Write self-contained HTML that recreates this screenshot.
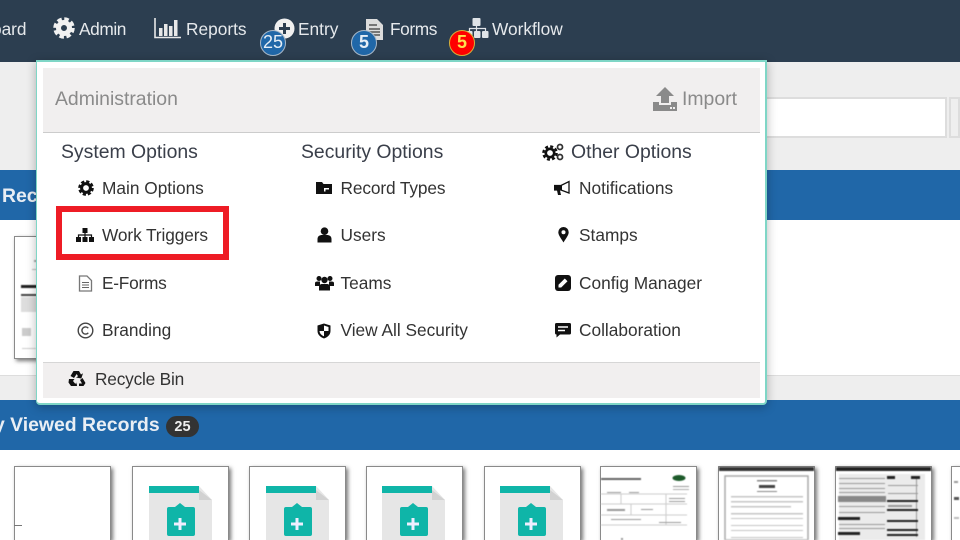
<!DOCTYPE html>
<html lang="en"><head><meta charset="utf-8"><title>Administration</title>
<style>
html,body{margin:0;padding:0;background:#fff;overflow:hidden;width:960px;height:540px}
#p{position:relative;width:960px;height:540px;overflow:hidden;background:#fff;font-family:"Liberation Sans",sans-serif;filter:blur(.35px)}
#p div,#p svg,#p span{position:absolute}
.t{white-space:nowrap;line-height:20px;font-size:17.3px;color:#333}
.n{color:#e6e9ec}
.h{font-size:19.4px;color:#3a3f4a}
.g{font-size:19.4px;color:#8a8a8a}
.b{font-size:19.4px;font-weight:bold;color:#e9eef4}
.th{background:#fff;border:1px solid #8a8a8a;border-bottom:none;box-shadow:2px 2px 4px #777;width:95px;height:73px;box-sizing:content-box}
.bd{width:26px;height:26px;border-radius:50%;box-sizing:border-box;border:1.5px solid #a9b9c9;background:#2067a8;color:#e6eef6;text-align:center;line-height:23px;font-size:18px}
.d{filter:blur(.5px)}
</style></head><body>
<div id="p">
<div style="left:0;top:0;width:960px;height:62px;background:#2c3e50"></div>
<div style="left:0;top:62px;width:960px;height:108px;background:#eee"></div>
<div style="left:760px;top:97px;width:187px;height:41px;background:#fff;border-top:2px solid #ddd;border-bottom:2px solid #ddd;border-right:2px solid #ddd;box-sizing:border-box"></div>
<div style="left:949px;top:97px;width:11px;height:41px;background:#efefef;border:2px solid #ddd;box-sizing:border-box"></div>
<div style="left:0;top:170px;width:960px;height:50px;background:#2067a8"></div>
<div style="left:0;top:220px;width:960px;height:155px;background:#fff"></div>
<div style="left:0;top:375px;width:960px;height:25px;background:#eee;border-top:1px solid #ddd;box-sizing:border-box"></div>
<div style="left:0;top:400px;width:960px;height:50px;background:#2067a8"></div>

<span class="t b" style="left:2px;top:186px">Rec</span>
<span class="t b" style="left:-6px;top:415px">y&nbsp;Viewed Records</span>
<div style="left:166px;top:416px;width:33px;height:21px;border-radius:11px;background:#333;color:#eee;font-size:14.5px;font-weight:bold;text-align:center;line-height:22px">25</div>

<!-- top-row thumbnail -->
<div class="th" style="left:14px;top:236px;width:60px;height:121px;border-bottom:1px solid #8a8a8a"></div>
<svg class="d" style="left:14px;top:236px" width="24" height="122" viewBox="0 0 24 122"><rect x="7" y="49" width="17" height="3" fill="#222"/><rect x="7" y="58" width="17" height="2" fill="#444"/><rect x="7" y="61" width="17" height="15" fill="#ddd"/><rect x="8" y="92" width="9" height="8" fill="#ccc"/><rect x="20" y="24" width="4" height="2" fill="#aaa"/><rect x="18" y="33" width="6" height="1" fill="#bbb"/><rect x="8" y="112" width="14" height="1" fill="#ccc"/></svg>

<!-- bottom-row thumbnails -->
<div class="th" style="left:14px;top:466px"></div>
<div style="left:14px;top:525px;width:8px;height:1px;background:#777"></div>
<div class="th" style="left:132px;top:466px"></div>
<div class="th" style="left:249px;top:466px"></div>
<div class="th" style="left:366px;top:466px"></div>
<div class="th" style="left:484px;top:466px"></div>
<div class="th" style="left:600px;top:466px"></div>
<div class="th" style="left:718px;top:466px"></div>
<div class="th" style="left:835px;top:466px"></div>
<div class="th" style="left:951px;top:466px"></div>

<svg style="left:149px;top:486px" width="64" height="54" viewBox="0 0 64 54"><path d="M0 0H50L63 14V54H0Z" fill="#e6e6e6"/><path d="M50 4L63 14H50Z" fill="#d2d2d2"/><rect width="50" height="7" fill="#0fb5a8"/><path d="M18 23a2 2 0 0 1 2-2h6l5-4 5 4h8a2 2 0 0 1 2 2v25a2 2 0 0 1-2 2H20a2 2 0 0 1-2-2z" fill="#0fb5a8"/><path d="M31 32v12M25 38h12" stroke="#eef" stroke-width="3"/></svg>
<svg style="left:266px;top:486px" width="64" height="54" viewBox="0 0 64 54"><path d="M0 0H50L63 14V54H0Z" fill="#e6e6e6"/><path d="M50 4L63 14H50Z" fill="#d2d2d2"/><rect width="50" height="7" fill="#0fb5a8"/><path d="M18 23a2 2 0 0 1 2-2h6l5-4 5 4h8a2 2 0 0 1 2 2v25a2 2 0 0 1-2 2H20a2 2 0 0 1-2-2z" fill="#0fb5a8"/><path d="M31 32v12M25 38h12" stroke="#eef" stroke-width="3"/></svg>
<svg style="left:382px;top:486px" width="64" height="54" viewBox="0 0 64 54"><path d="M0 0H50L63 14V54H0Z" fill="#e6e6e6"/><path d="M50 4L63 14H50Z" fill="#d2d2d2"/><rect width="50" height="7" fill="#0fb5a8"/><path d="M18 23a2 2 0 0 1 2-2h6l5-4 5 4h8a2 2 0 0 1 2 2v25a2 2 0 0 1-2 2H20a2 2 0 0 1-2-2z" fill="#0fb5a8"/><path d="M31 32v12M25 38h12" stroke="#eef" stroke-width="3"/></svg>
<svg style="left:500px;top:486px" width="64" height="54" viewBox="0 0 64 54"><path d="M0 0H50L63 14V54H0Z" fill="#e6e6e6"/><path d="M50 4L63 14H50Z" fill="#d2d2d2"/><rect width="50" height="7" fill="#0fb5a8"/><path d="M18 23a2 2 0 0 1 2-2h6l5-4 5 4h8a2 2 0 0 1 2 2v25a2 2 0 0 1-2 2H20a2 2 0 0 1-2-2z" fill="#0fb5a8"/><path d="M31 32v12M25 38h12" stroke="#eef" stroke-width="3"/></svg>

<!-- document thumbs -->
<svg class="d" style="left:601px;top:467px" width="95" height="73" viewBox="0 0 95 73"><rect x="0" y="11" width="40" height="2" fill="#666"/><ellipse cx="78" cy="11" rx="6.500" ry="3" fill="#1d5a2a"/><rect x="72" y="19" width="16" height="1" fill="#999"/><rect x="72" y="22" width="16" height="1" fill="#aaa"/><g fill="none" stroke="#ccc"><path d="M0 27H86M0 37H86M0 48H86M0 58H86M20 27V37M65 27V58M30 37V48"/></g><g fill="#999"><rect x="6" y="25" width="14" height="1"/><rect x="28" y="25" width="10" height="1"/><rect x="68" y="31" width="16" height="1"/><rect x="68" y="34" width="16" height="1"/><rect x="6" y="42" width="18" height="2"/><rect x="40" y="42" width="12" height="1"/><rect x="10" y="52" width="30" height="1"/><rect x="58" y="55" width="22" height="1"/><rect x="20" y="71" width="2" height="2"/></g></svg>
<svg class="d" style="left:719px;top:467px" width="95" height="73" viewBox="0 0 95 73"><rect width="95" height="4" fill="#333"/><rect x="6" y="9" width="83" height="64" fill="none" stroke="#aaa" stroke-width="1.500"/><rect x="38" y="13" width="20" height="1.500" fill="#888"/><rect x="40" y="18" width="16" height="3" fill="#444"/><rect x="38" y="24" width="20" height="1" fill="#888"/><g fill="#c6c6c6"><rect x="12" y="29" width="72" height="1.500"/><rect x="12" y="34" width="72" height="1.500"/><rect x="12" y="39" width="60" height="1.500"/><rect x="12" y="46" width="72" height="1.500"/><rect x="12" y="51" width="72" height="1"/><rect x="12" y="58" width="72" height="1"/><rect x="12" y="63" width="72" height="1"/><rect x="12" y="70" width="72" height="1"/></g></svg>
<svg class="d" style="left:836px;top:467px" width="95" height="73" viewBox="0 0 95 73"><rect width="95" height="4" fill="#222"/><rect x="3" y="7" width="86" height="66" fill="#ebebeb"/><g fill="#999"><rect x="3" y="11" width="46" height="1"/><rect x="3" y="16" width="46" height="1"/><rect x="3" y="21" width="46" height="1"/><rect x="3" y="25" width="46" height="1"/><rect x="3" y="39" width="46" height="1"/><rect x="3" y="45" width="46" height="1"/><rect x="3" y="57" width="46" height="1"/><rect x="3" y="61" width="46" height="1"/><rect x="52" y="18" width="30" height="1"/><rect x="52" y="26" width="30" height="1"/><rect x="52" y="38" width="24" height="2"/><rect x="80" y="10" width="1" height="60"/></g><rect x="2" y="29" width="48" height="6" fill="#888"/><g fill="#222"><rect x="2" y="50" width="22" height="3"/><rect x="2" y="65" width="22" height="3"/><rect x="51" y="9" width="8" height="3"/><rect x="75" y="9" width="9" height="3"/><rect x="51" y="33" width="31" height="2"/><rect x="51" y="42" width="31" height="2"/><rect x="51" y="53" width="31" height="2"/><rect x="51" y="62" width="31" height="2"/><rect x="51" y="67" width="31" height="2"/></g></svg>
<svg class="d" style="left:952px;top:467px" width="8" height="73" viewBox="0 0 8 73"><rect x="2" y="14" width="4" height="2" fill="#999"/><rect x="2" y="30" width="5" height="3" fill="#555"/><rect x="2" y="50" width="5" height="2" fill="#bbb"/></svg>

<!-- nav -->
<span class="t n" style="left:-58px;top:19px">Dashboard</span>
<svg style="left:53px;top:17px" width="22" height="22" viewBox="0 0 22 22"><circle cx="11" cy="11" r="5.500" fill="none" stroke="#f2f2f2" stroke-width="5"/><circle cx="11" cy="11" r="9" fill="none" stroke="#f2f2f2" stroke-width="3.500" stroke-dasharray="4.500 2.570"/></svg>
<span class="t n" style="left:79px;top:19px;letter-spacing:-.4px">Admin</span>
<svg style="left:154px;top:18px" width="28" height="21" viewBox="0 0 28 21" fill="#e8e8e8"><path d="M1 0V19.500H27" fill="none" stroke="#e8e8e8" stroke-width="1.600"/><rect x="5" y="10" width="3.500" height="8"/><rect x="10" y="6" width="3.500" height="12"/><rect x="15" y="8" width="3.500" height="10"/><rect x="20" y="2" width="3.500" height="16"/></svg>
<span class="t n" style="left:186px;top:19px">Reports</span>
<svg style="left:274px;top:18px" width="21" height="21" viewBox="0 0 21 21"><circle cx="10.500" cy="10.500" r="10" fill="#f0f0f0"/><path d="M10.500 5v11M5 10.500h11" stroke="#2c3e50" stroke-width="3"/></svg>
<span class="t n" style="left:298px;top:19px">Entry</span>
<svg style="left:365px;top:18px" width="19" height="24" viewBox="0 0 19 24"><path d="M1 1H12L18 7V22H1Z" fill="#dcdcdc"/><path d="M4 7H12M4 11H15M4 14H15M4 17H15" stroke="#555" stroke-width="1.500"/></svg>
<span class="t n" style="left:390px;top:19px;letter-spacing:-.4px">Forms</span>
<svg style="left:466px;top:17px" width="23" height="22" viewBox="0 0 23 22" fill="#e0e4e8"><rect x="6.500" y="1" width="8" height="8" rx="1"/><rect x="0" y="14" width="6.500" height="7" rx="1"/><rect x="8" y="14" width="6.500" height="7" rx="1"/><rect x="16" y="14" width="6.500" height="7" rx="1"/><path d="M10.500 9v5M3.500 14v-2.500h16V14" fill="none" stroke="#e0e4e8" stroke-width="1.200"/></svg>
<span class="t n" style="left:492px;top:19px">Workflow</span>
<div class="bd" style="left:260px;top:30px">25</div>
<div class="bd" style="left:351px;top:30px;font-weight:bold">5</div>
<div class="bd" style="left:449px;top:30px;background:#f00;border-color:#d9b23a;color:#ffe14d;font-weight:bold">5</div>

<!-- dropdown -->
<div style="left:36px;top:60px;width:731px;height:345px;background:#fff;border:1px solid #7fd6c6;border-width:2px 2px 2px 1px;border-radius:0 0 4px 4px;box-sizing:border-box;box-shadow:0 2px 10px rgba(0,0,0,.28)"></div>
<div style="left:43px;top:68px;width:717px;height:65px;background:#f1efef;border-bottom:1.500px solid #ccc;box-sizing:border-box"></div>
<div style="left:43px;top:362px;width:717px;height:36px;background:#f1efef;border-top:1.500px solid #d6d6d6;box-sizing:border-box"></div>
<span class="t g" style="left:55px;top:89px">Administration</span>
<svg style="left:652px;top:87px" width="26" height="24" viewBox="0 0 26 24" fill="#8a8a8a"><path d="M13 0L22 9H17V16H9V9H4Z"/><path d="M1 15H7V18H19V15H25V24H1Z"/><rect x="18" y="20" width="2" height="2" fill="#f1efef"/><rect x="21" y="20" width="2" height="2" fill="#f1efef"/></svg>
<span class="t g" style="left:682px;top:89px">Import</span>

<span class="t h" style="left:61px;top:142px">System Options</span>
<span class="t h" style="left:301px;top:142px">Security Options</span>
<svg style="left:542px;top:143px" width="22" height="18" viewBox="0 0 22 18"><circle cx="8" cy="10" r="4.200" fill="none" stroke="#111" stroke-width="2.600"/><circle cx="8" cy="10" r="6.600" fill="none" stroke="#111" stroke-width="2.400" stroke-dasharray="3 2.180"/><circle cx="18" cy="4" r="2.500" fill="none" stroke="#333" stroke-width="1.800"/><circle cx="18" cy="14" r="2.500" fill="none" stroke="#333" stroke-width="1.800"/></svg>
<span class="t h" style="left:571px;top:142px">Other Options</span>

<!-- col 1 -->
<svg style="left:78px;top:180px" width="16" height="16" viewBox="0 0 16 16"><circle cx="8" cy="8" r="4.400" fill="none" stroke="#111" stroke-width="3"/><circle cx="8" cy="8" r="6.500" fill="none" stroke="#111" stroke-width="2.600" stroke-dasharray="3.200 1.900"/></svg>
<span class="t" style="left:102px;top:178px">Main Options</span>
<div style="left:56px;top:206px;width:173px;height:54px;border:6.500px solid #ee1c25;box-sizing:border-box"></div>
<svg style="left:76px;top:227px" width="18" height="16" viewBox="0 0 18 16" fill="#111"><rect x="6.500" y="1" width="5" height="5"/><rect x="0" y="10" width="5" height="5"/><rect x="6.500" y="10" width="5" height="5"/><rect x="13" y="10" width="5" height="5"/><path d="M9 6v4M2.500 10V8h13v2" fill="none" stroke="#111" stroke-width="1.200"/></svg>
<span class="t" style="left:102px;top:225px;letter-spacing:-.1px">Work Triggers</span>
<svg style="left:78px;top:275px" width="15" height="17" viewBox="0 0 15 17"><path d="M1.500 1H9L13.500 5.500V16H1.500Z" fill="#fff" stroke="#777" stroke-width="1.300"/><path d="M4 7.500H11M4 10H11M4 12.500H11" stroke="#666" stroke-width="1.100"/></svg>
<span class="t" style="left:102px;top:273px;letter-spacing:-.25px">E-Forms</span>
<svg style="left:77px;top:322px" width="17" height="17" viewBox="0 0 17 17" fill="none" stroke="#444"><circle cx="8.500" cy="8.500" r="7.300" stroke-width="1.400"/><path d="M11.300 6.200A3.600 3.600 0 1 0 11.300 10.800" stroke-width="1.400"/></svg>
<span class="t" style="left:102px;top:320px">Branding</span>

<!-- col 2 -->
<svg style="left:316px;top:181px" width="16" height="14" viewBox="0 0 16 14" fill="#111"><path d="M0 1H6L7.500 3H16V13H0Z"/><path d="M8 7H13V8.500H9.500V10.500H8Z" fill="#fff"/></svg>
<span class="t" style="left:340.500px;top:178px;letter-spacing:-.12px">Record Types</span>
<svg style="left:317px;top:227px" width="15" height="16" viewBox="0 0 15 16" fill="#111"><circle cx="7.500" cy="4.200" r="3.800"/><path d="M0.500 15.500V12C0.500 9 3 8 5 8H10C12 8 14.500 9 14.500 12V15.500Z"/></svg>
<span class="t" style="left:340.500px;top:225px">Users</span>
<svg style="left:315px;top:275px" width="19" height="16" viewBox="0 0 19 16" fill="#111"><circle cx="4" cy="3.500" r="2.500"/><circle cx="15" cy="3.500" r="2.500"/><circle cx="9.500" cy="5" r="3.200"/><path d="M0 11V8C0 7 1 6.500 2.500 6.500H5L5 11ZM19 11V8C19 7 18 6.500 16.500 6.500H14L14 11Z"/><path d="M4 15.500V12C4 10 5.500 9 7 9H12C13.500 9 15 10 15 12V15.500Z"/></svg>
<span class="t" style="left:340.500px;top:273px">Teams</span>
<svg style="left:317px;top:323px" width="14" height="16" viewBox="0 0 14 16"><path d="M7 .5L13.500 2.500V8C13.500 12 10 14.500 7 15.500C4 14.500.5 12 .5 8V2.500Z" fill="#111"/><path d="M7 2.500L11.500 4V8H7ZM7 8V13.300C5 12.500 2.700 10.800 2.500 8Z" fill="#fff"/></svg>
<span class="t" style="left:340.500px;top:320px">View All Security</span>

<!-- col 3 -->
<svg style="left:554px;top:180px" width="18" height="16" viewBox="0 0 18 16"><path d="M0.500 5.500H7L15 1.500V13L7 10H0.500Z" fill="#fff" stroke="#111" stroke-width="1.300"/><path d="M0 5H8V10.500H6L7 15H4L3 10.500H0Z" fill="#111"/></svg>
<span class="t" style="left:579px;top:178px">Notifications</span>
<svg style="left:558px;top:227px" width="11" height="16" viewBox="0 0 11 16"><path fill-rule="evenodd" d="M5.500 0A5.200 5.200 0 0 1 10.700 5.200C10.700 8.500 7 12.500 5.500 15.500C4 12.500.3 8.500.3 5.200A5.200 5.200 0 0 1 5.500 0ZM5.500 3.200A2 2 0 1 0 5.500 7.200A2 2 0 1 0 5.500 3.200Z" fill="#111"/></svg>
<span class="t" style="left:579px;top:225px">Stamps</span>
<svg style="left:555px;top:275px" width="16" height="16" viewBox="0 0 16 16"><rect width="16" height="16" rx="3" fill="#111"/><path d="M3.500 12.500V9.800L9.800 3.500L12.500 6.200L6.200 12.500Z" fill="#fff"/></svg>
<span class="t" style="left:579px;top:273px">Config Manager</span>
<svg style="left:555px;top:323px" width="16" height="15" viewBox="0 0 16 15"><path d="M1.500 0H14.500A1.500 1.500 0 0 1 16 1.500V10A1.500 1.500 0 0 1 14.500 11.500H5L1.500 14.500V11.500A1.500 1.500 0 0 1 0 10V1.500A1.500 1.500 0 0 1 1.500 0Z" fill="#111"/><path d="M3 4H13M3 7.500H10" stroke="#fff" stroke-width="1.500"/></svg>
<span class="t" style="left:579px;top:320px">Collaboration</span>

<svg style="left:68px;top:370px" width="18" height="17" viewBox="0 0 18 17" fill="#111"><path d="M5.500 1H11L13 4.500L15 3.300L13.300 8.500L8 7.500L10 6.300L8.700 4L6 8L2.500 6Z"/><path d="M14.500 8L17.500 13L15.500 16H11V13.500L14 13.500L12 10Z"/><path d="M1 9L6.500 9L5 11L7 13.500H8.500V11.500L9 16H3L.5 12.500Z"/></svg>
<span class="t" style="left:95px;top:369px;letter-spacing:-.2px">Recycle Bin</span>
</div>
</body></html>
